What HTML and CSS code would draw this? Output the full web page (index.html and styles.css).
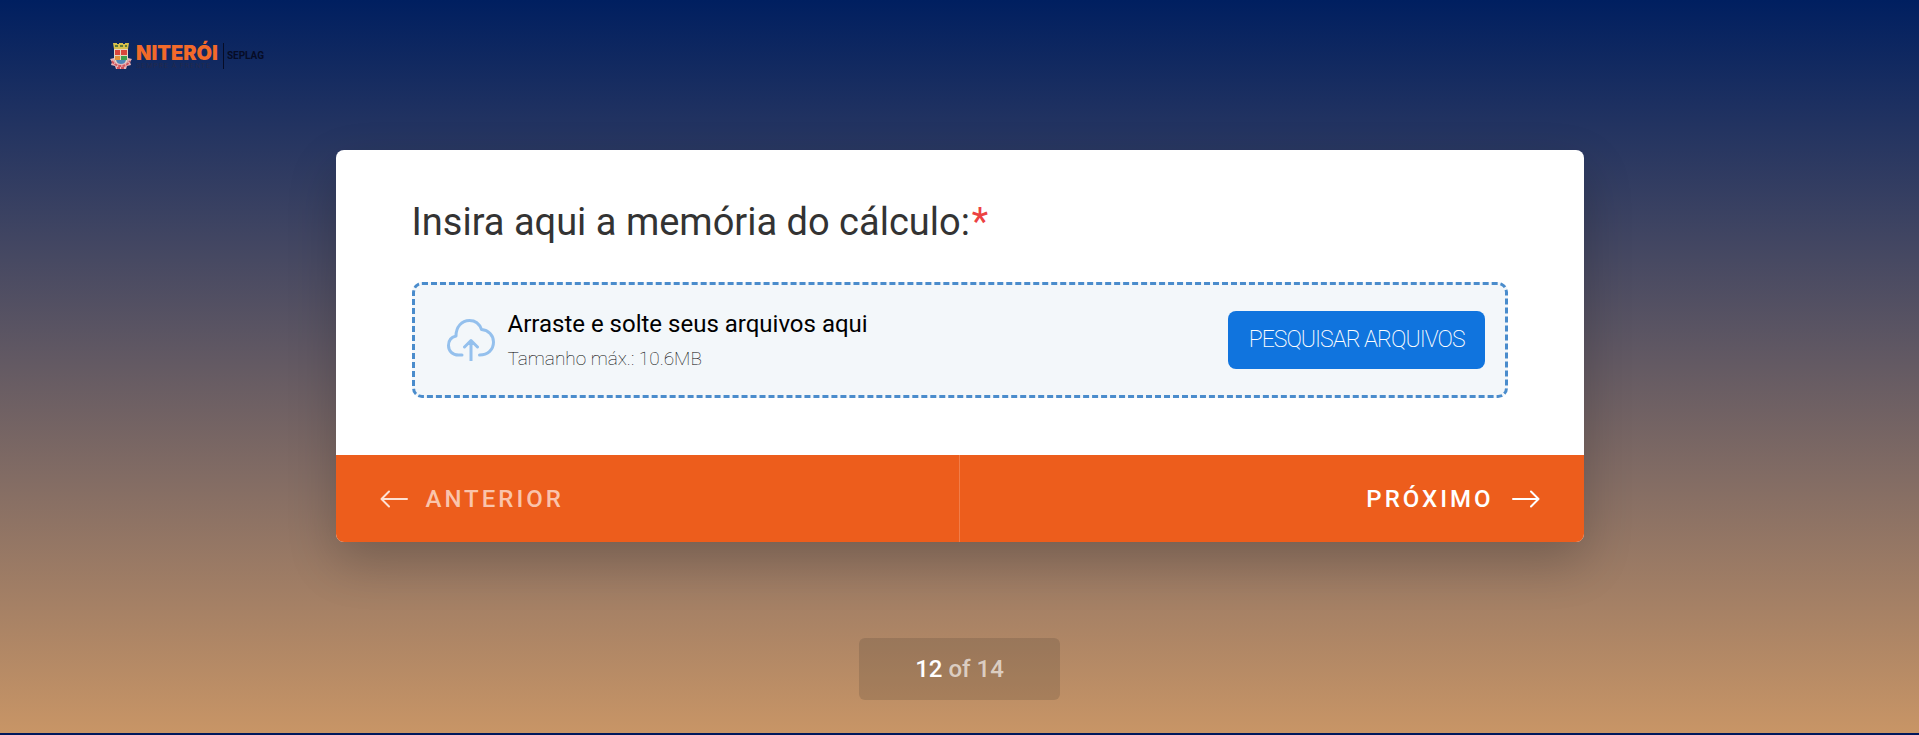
FILE: index.html
```html
<!DOCTYPE html>
<html lang="pt-BR">
<head>
<meta charset="utf-8">
<title>Insira aqui a memória do cálculo</title>
<link rel="stylesheet" href="styles.css">
</head>
<body>
<div class="page">
  <header class="brand">
    <svg class="crest" viewBox="0 0 22 28" aria-hidden="true">
      <path fill="#d8c04a" d="M3 1h4v1h2V1h4v1h2V1h4l-1 6H4z"/>
      <path fill="#5c7a3a" d="M5 3h3v2H5zM10 3h3v2h-3zM15 3h2v2h-2z"/>
      <path fill="#e8d4c0" d="M4 7h14v10q0 5-7 7q-7-2-7-7z"/>
      <path fill="#d9463c" d="M5 8h5v5H5zM11 8h6v5h-6z"/>
      <path fill="#e3923c" d="M5 14h5v4H5z"/>
      <path fill="#3f9f4c" d="M11 14h6v4h-6z"/>
      <path fill="#4f86b8" d="M6 18h10q-1 4-5 5q-4-1-5-5z"/>
      <path fill="#e6b4b8" d="M0 17l4-1 1 4q6 4 12 0l1-4 4 1-2 3 1 3-4 1-1 3H6l-1-3-4-1 1-3z"/>
      <path fill="none" stroke="#d0545c" stroke-width="2" stroke-dasharray="3 1" d="M2 19q3 5 9 5t9-5M7 26h8"/>
    </svg>
    <div class="brand-main">
      <strong class="brand-name">NITERÓI</strong>
      <span class="brand-tag">SEMPRE À FRENTE</span>
    </div>
    <span class="brand-unit">SEPLAG</span>
  </header>
  <main class="main">
    <form class="card">
      <div class="question">
        <label class="title" for="browse">Insira aqui a memória do cálculo:<span class="required">*</span></label>
        <div class="drop">
          <svg class="cloud" viewBox="0 0 48 42" aria-hidden="true">
            <path d="M15 36h-3.500C5.500 36 1.500 32 1.500 26.500c0-5 3-8.500 7.500-9.500C9 8 14.500 1.500 22.500 1.500c6 0 10 3.500 12 9C41.500 11 46.500 16.500 46.500 23c0 7.500-5.500 13-14 13M24 41.500V22M17.500 28l6.500-6.500L30.500 28"/>
          </svg>
          <div class="drop-text">
            <p class="drop-title">Arraste e solte seus arquivos aqui</p>
            <p class="drop-limit">Tamanho máx.: 10.6MB</p>
          </div>
          <button class="browse" id="browse" type="button">PESQUISAR ARQUIVOS</button>
        </div>
      </div>
      <div class="nav">
        <button class="nav-button previous" type="button">
          <svg class="arrow" viewBox="0 0 28 18" aria-hidden="true"><path d="M27 9H2M9 1.500L1.500 9L9 16.500"/></svg>
          <span>ANTERIOR</span>
        </button>
        <button class="nav-button next" type="button">
          <span>PRÓXIMO</span>
          <svg class="arrow" viewBox="0 0 28 18" aria-hidden="true"><path d="M1 9h25M19 1.500L26.500 9L19 16.500"/></svg>
        </button>
      </div>
    </form>
  </main>
  <footer class="progress"><span class="current">12</span> of 14</footer>
</div>
</body>
</html>
```
FILE: styles.css
```css
* {
  box-sizing: border-box;
}

body {
  margin: 0;
  min-height: 100vh;
  padding-bottom: 2px;
  background: #00185c;
  font-family: Roboto, "Liberation Sans", sans-serif;
}

.page {
  display: flex;
  flex-direction: column;
  align-items: center;
  min-height: calc(100vh - 2px);
  padding: 39px 110px 33px;
  background: linear-gradient(#001f60, #c89566);
}

.brand {
  display: flex;
  align-items: center;
  align-self: flex-start;
  height: 34px;
}

.crest {
  width: 22px;
  height: 28px;
}

.brand-main {
  display: flex;
  flex-direction: column;
  padding: 0 5px 0 4px;
}

.brand-name {
  color: #f26a2a;
  font-family: Inter, sans-serif;
  font-size: 20px;
  font-weight: 900;
  line-height: 20px;
}

.brand-tag {
  color: #22294d;
  font-size: 7px;
  letter-spacing: 1px;
  line-height: 7px;
}

.brand-unit {
  padding: 6px 0 6px 3px;
  border-left: 1px solid #060c26;
  color: #060c26;
  font-size: 10px;
  font-weight: 700;
  line-height: 14px;
}

.main {
  display: flex;
  flex: 1;
  justify-content: center;
  align-self: stretch;
  padding-top: 77px;
}

.card {
  align-self: flex-start;
  width: 1248px;
  max-width: 100%;
  overflow: hidden;
  border-radius: 8px;
  background: #fff;
  box-shadow: 0 20px 50px rgba(0, 0, 0, 0.2);
}

.question {
  padding: 48px 76px 57px;
}

.title {
  display: block;
  margin-bottom: 36px;
  color: #333;
  font-size: 38px;
  line-height: 48px;
}

.required {
  margin-left: 2px;
  color: #ec4242;
}

.drop {
  display: flex;
  align-items: center;
  padding: 24px 20px 24px 32px;
  border: 3px dashed #4a8ccc;
  border-radius: 10px;
  background: #f3f7fa;
}

.cloud {
  width: 48px;
  height: 42px;
  fill: none;
  stroke: #94c0ed;
  stroke-width: 3;
  stroke-linecap: round;
  stroke-linejoin: round;
}

.drop-text {
  flex: 1;
  padding-left: 13px;
}

.drop-title,
.drop-limit {
  margin: 0;
}

.drop-title {
  color: #000;
  font-size: 24px;
  line-height: 30px;
}

.drop-limit {
  margin-top: 8px;
  color: #000;
  font-size: 19px;
  font-weight: 100;
  line-height: 24px;
}

.browse {
  padding: 0 20px 0 21px;
  border: 0;
  border-radius: 8px;
  background: #1074de;
  color: #fff;
  font-family: inherit;
  font-size: 23px;
  font-weight: 200;
  letter-spacing: -1px;
  line-height: 58px;
}

.nav {
  display: grid;
  grid-template-columns: 1fr 1fr;
}

.nav-button {
  display: flex;
  align-items: center;
  gap: 18px;
  height: 87px;
  padding: 0 44px;
  border: 0;
  background: #ed5d1c;
  color: #fff;
  font-family: inherit;
  font-size: 24px;
  font-weight: 500;
  letter-spacing: 3px;
}

.previous {
  border-right: 1px solid #f17d49;
  color: #fac4ab;
}

.next {
  justify-content: flex-end;
}

.arrow {
  width: 28px;
  height: 18px;
  fill: none;
  stroke: #fff;
  stroke-width: 2;
  stroke-linecap: round;
  stroke-linejoin: round;
}

.previous .arrow {
  stroke: #fde1d4;
}

.progress {
  padding: 0 56px;
  border-radius: 6px;
  background: rgba(70, 60, 50, 0.2);
  color: rgba(255, 255, 255, 0.65);
  font-size: 24px;
  font-weight: 500;
  line-height: 62px;
}

.current {
  color: #fff;
}
```
